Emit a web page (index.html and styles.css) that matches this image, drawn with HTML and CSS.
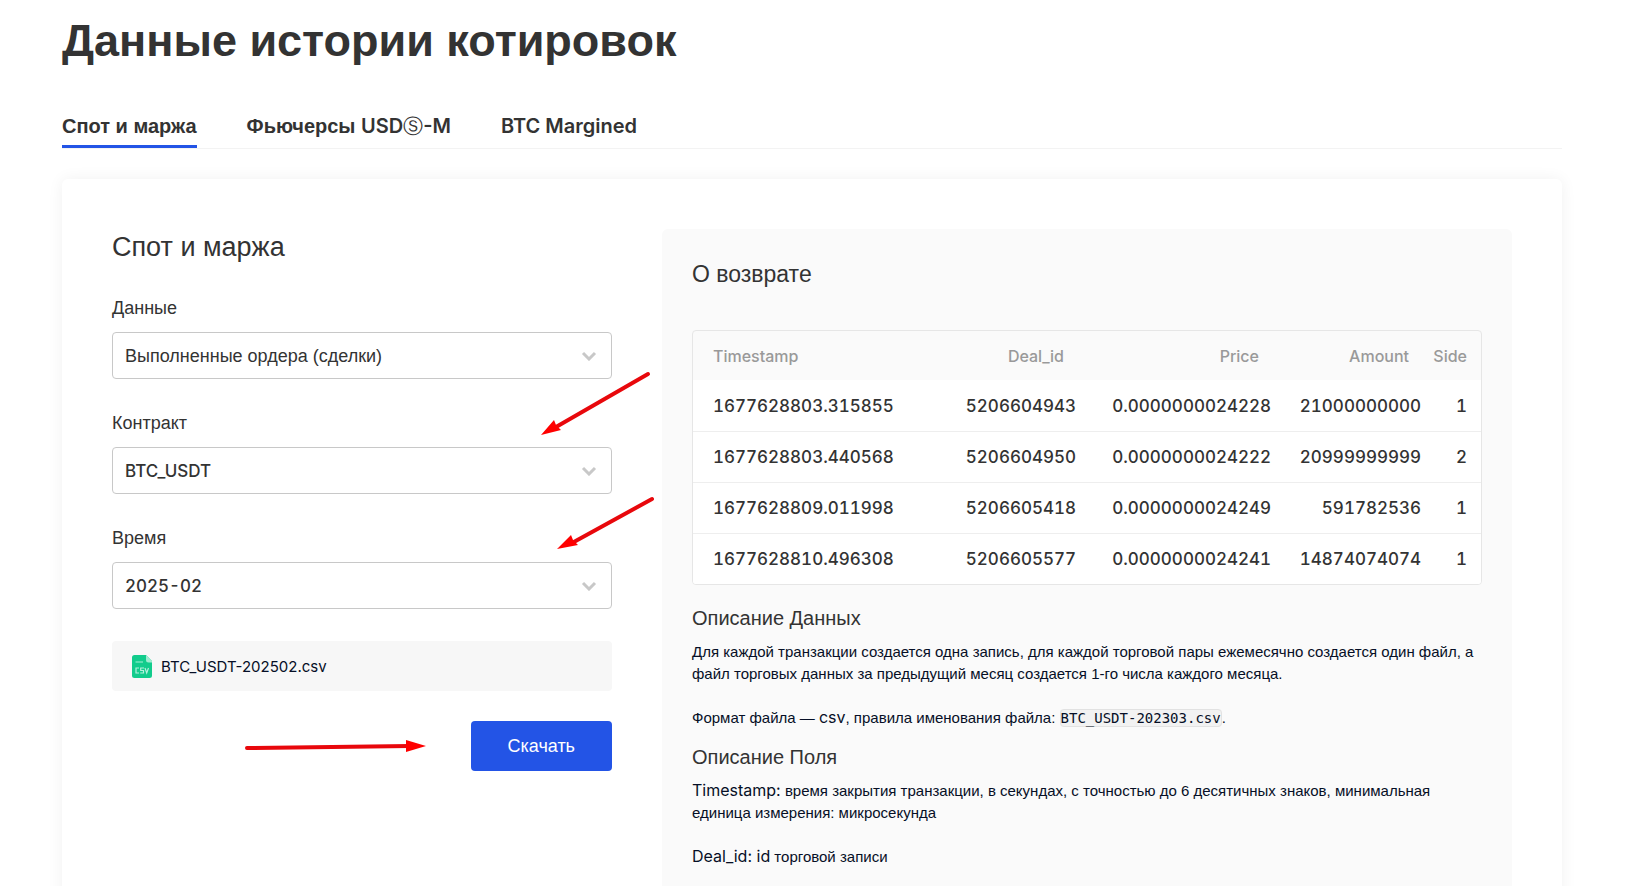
FILE: index.html
```html
<!DOCTYPE html>
<html lang="ru">
<head>
<meta charset="utf-8">
<title>Данные истории котировок</title>
<meta name="viewport" content="width=device-width, initial-scale=1">
<link rel="stylesheet" href="styles.css">
</head>
<body>
<main class="page">
  <h1 class="title">Данные истории котировок</h1>
  <nav class="tabs">
    <a class="tab tab-active" href="#spot">Спот и маржа</a>
    <a class="tab" href="#usds">Фьючерсы <span class="latin">USD<span class="sign">Ⓢ</span>-M</span></a>
    <a class="tab" href="#btc"><span class="latin">BTC Margined</span></a>
  </nav>
  <section class="card">
    <form class="form">
      <h2 class="form-title">Спот и маржа</h2>
      <div class="field">
        <label class="label" for="data">Данные</label>
        <div class="select-wrap">
          <select class="select" id="data"><option>Выполненные ордера (сделки)</option></select>
          <svg class="chevron" viewBox="0 0 16 10"><path d="M2 2l6 6 6-6"/></svg>
        </div>
      </div>
      <div class="field">
        <label class="label" for="contract">Контракт</label>
        <div class="select-wrap">
          <select class="select select-latin" id="contract"><option>BTC_USDT</option></select>
          <svg class="chevron" viewBox="0 0 16 10"><path d="M2 2l6 6 6-6"/></svg>
        </div>
      </div>
      <div class="field">
        <label class="label" for="time">Время</label>
        <div class="select-wrap">
          <select class="select select-latin" id="time"><option>2025-02</option></select>
          <svg class="chevron" viewBox="0 0 16 10"><path d="M2 2l6 6 6-6"/></svg>
        </div>
      </div>
      <div class="file">
        <svg class="file-icon" viewBox="0 0 20 23">
          <path fill="#12cc8c" d="M2.500 0H14l6 6v14.500a2.500 2.500 0 0 1-2.500 2.500h-15A2.500 2.500 0 0 1 0 20.500v-18A2.500 2.500 0 0 1 2.500 0z"/>
          <path fill="#a0ebd1" d="M14 0l6 6v1.500h-3.500A2.500 2.500 0 0 1 14 5z"/>
          <path stroke="#8ce8c8" stroke-width="1.200" d="M3.500 7H11"/>
          <path fill="none" stroke="#b4f0dc" stroke-width="1.200" d="M7 13H4v5h3M12 13H8.700v2.500H11.500V18H8.200M13 13l1.700 5 1.800-5"/>
        </svg>
        <span>BTC_USDT-202502.csv</span>
      </div>
      <button class="download" type="button">Скачать</button>
      <svg class="arrows" viewBox="0 0 560 560" aria-hidden="true">
        <g stroke="#e8080c" stroke-width="4" stroke-linecap="round">
          <path d="M536 145L444 198"/>
          <path d="M540 270L460 314"/>
          <path d="M135 519L298 517"/>
        </g>
        <g fill="#f00">
          <path d="M429 206l13-15 2 5 5 5z"/>
          <path d="M445 320l14-14 2 5 5 5z"/>
          <path d="M314 517l-20-6v12z"/>
        </g>
      </svg>
    </form>
    <article class="info">
      <h2 class="info-title">О возврате</h2>
      <div class="table-box">
        <table class="table">
          <colgroup><col><col class="col-deal"><col class="col-price"><col class="col-amount"><col class="col-side"></colgroup>
          <thead><tr><th>Timestamp</th><th>Deal_id</th><th>Price</th><th>Amount</th><th>Side</th></tr></thead>
          <tbody>
            <tr><td>1677628803.315855</td><td>5206604943</td><td>0.0000000024228</td><td>21000000000</td><td>1</td></tr>
            <tr><td>1677628803.440568</td><td>5206604950</td><td>0.0000000024222</td><td>20999999999</td><td>2</td></tr>
            <tr><td>1677628809.011998</td><td>5206605418</td><td>0.0000000024249</td><td>591782536</td><td>1</td></tr>
            <tr><td>1677628810.496308</td><td>5206605577</td><td>0.0000000024241</td><td>14874074074</td><td>1</td></tr>
          </tbody>
        </table>
      </div>
      <h3 class="subtitle">Описание Данных</h3>
      <p class="text">Для каждой транзакции создается одна запись, для каждой торговой пары ежемесячно создается один файл, а файл торговых данных за предыдущий месяц создается 1-го числа каждого месяца.</p>
      <p class="text">Формат файла — <span class="latin">csv</span>, правила именования файла: <code class="code">BTC_USDT-202303.csv</code>.</p>
      <h3 class="subtitle">Описание Поля</h3>
      <p class="text"><span class="latin">Timestamp:</span> время закрытия транзакции, в секундах, с точностью до 6 десятичных знаков, минимальная единица измерения: микросекунда</p>
      <p class="text"><span class="latin">Deal_id: id</span> торговой записи</p>
    </article>
  </section>
</main>
</body>
</html>
```
FILE: styles.css
```css
* { box-sizing: border-box; }
body {
  margin: 0;
  background: #fff;
  color: #333;
  font-family: "Liberation Sans", Arial, sans-serif;
}
.latin { font-family: Inter, sans-serif; }
.page {
  display: flex;
  flex-direction: column;
  min-height: 100vh;
  padding: 15px 89px 0 62px;
}
.title {
  margin: 0 0 37px;
  font-size: 45px;
  line-height: 52px;
  font-weight: 700;
}
.tabs {
  display: flex;
  gap: 50px;
  margin-bottom: 30px;
  border-bottom: 1px solid #f3f3f3;
}
.tab {
  height: 44px;
  border-bottom: 3px solid transparent;
  color: #333;
  font-size: 20px;
  line-height: 44px;
  font-weight: 700;
  text-decoration: none;
}
.tab-active { border-bottom-color: #2354e6; }
.tab .latin { font-weight: 600; }
.sign { font-family: "DejaVu Sans", sans-serif; font-weight: 400; }
.card {
  flex: 1;
  display: grid;
  grid-template-columns: minmax(0, 10fr) minmax(0, 17fr);
  gap: 50px;
  padding: 50px 50px 0;
  border-radius: 6px 6px 0 0;
  box-shadow: 0 0 16px rgba(0, 0, 0, 0.06);
}
.form { position: relative; }
.form-title {
  margin: 0 0 30px;
  font-size: 27px;
  line-height: 37px;
  font-weight: 400;
}
.field { margin-bottom: 32px; }
.label {
  display: block;
  margin-bottom: 12px;
  font-size: 18px;
  line-height: 24px;
}
.select-wrap {
  display: grid;
  align-items: center;
}
.select, .chevron { grid-area: 1 / 1; }
.select {
  width: 100%;
  height: 47px;
  padding: 0 12px;
  border: 1px solid #c8c8c8;
  border-radius: 4px;
  background: #fff;
  color: #333;
  font-family: "Liberation Sans", Arial, sans-serif;
  font-size: 18px;
  appearance: none;
}
.select-latin {
  font-family: Inter, sans-serif;
  font-size: 17px;
  font-weight: 500;
  font-variant-numeric: tabular-nums;
}
.chevron {
  justify-self: end;
  width: 16px;
  height: 10px;
  margin-right: 15px;
  fill: none;
  stroke: #c8c8c8;
  stroke-width: 3;
  pointer-events: none;
}
.file {
  display: flex;
  align-items: center;
  gap: 9px;
  height: 50px;
  padding: 0 20px;
  border-radius: 4px;
  background: #f7f7f7;
  color: #060f26;
  font-family: Inter, sans-serif;
  font-size: 15px;
}
.file-icon { width: 20px; height: 23px; }
.download {
  display: block;
  height: 50px;
  margin: 30px 0 0 auto;
  padding: 0 37px;
  border: 0;
  border-radius: 4px;
  background: #2354e6;
  color: #fff;
  font-family: "Liberation Sans", Arial, sans-serif;
  font-size: 18px;
}
.arrows {
  position: absolute;
  top: 0;
  left: 0;
  width: 560px;
  height: 560px;
  pointer-events: none;
}
.info {
  padding: 29px 30px;
  border-radius: 6px 6px 0 0;
  background: #fafafa;
}
.info-title {
  margin: 0 0 40px;
  font-size: 23px;
  line-height: 32px;
  font-weight: 400;
}
.table-box {
  margin-bottom: 19px;
  border: 1px solid #e6e6e6;
  border-radius: 4px;
  overflow: hidden;
}
.table {
  width: 100%;
  border-collapse: separate;
  border-spacing: 0;
  table-layout: fixed;
  font-family: Inter, sans-serif;
  font-variant-numeric: tabular-nums;
}
.col-deal { width: 160px; }
.col-price { width: 195px; }
.col-amount { width: 150px; }
.col-side { width: 48px; }
.table th, .table td {
  height: 51px;
  padding: 0 12px 0 0;
  text-align: right;
  font-weight: 500;
  white-space: nowrap;
}
.table th {
  height: 49px;
  padding-right: 24px;
  color: #999;
  font-size: 16px;
}
.table th:last-child, .table td:last-child { padding-right: 14px; }
.table td {
  background: #fff;
  font-size: 17px;
}
.table th:first-child, .table td:first-child {
  padding-left: 20px;
  text-align: left;
}
.table tr + tr td { border-top: 1px solid #eee; }
.subtitle {
  margin: 0 0 9px;
  font-size: 20px;
  line-height: 28px;
  font-weight: 400;
}
.text {
  margin: 0 0 22px;
  color: #060f26;
  font-size: 15px;
  line-height: 22px;
}
.text .latin {
  font-size: 16px;
  line-height: 20px;
}
.text + .subtitle { margin-top: -8px; }
.code {
  border: 1px solid #e2e2e2;
  border-radius: 4px;
  background: #f2f2f2;
  font-family: "DejaVu Sans Mono", monospace;
  font-size: 14px;
}
```
